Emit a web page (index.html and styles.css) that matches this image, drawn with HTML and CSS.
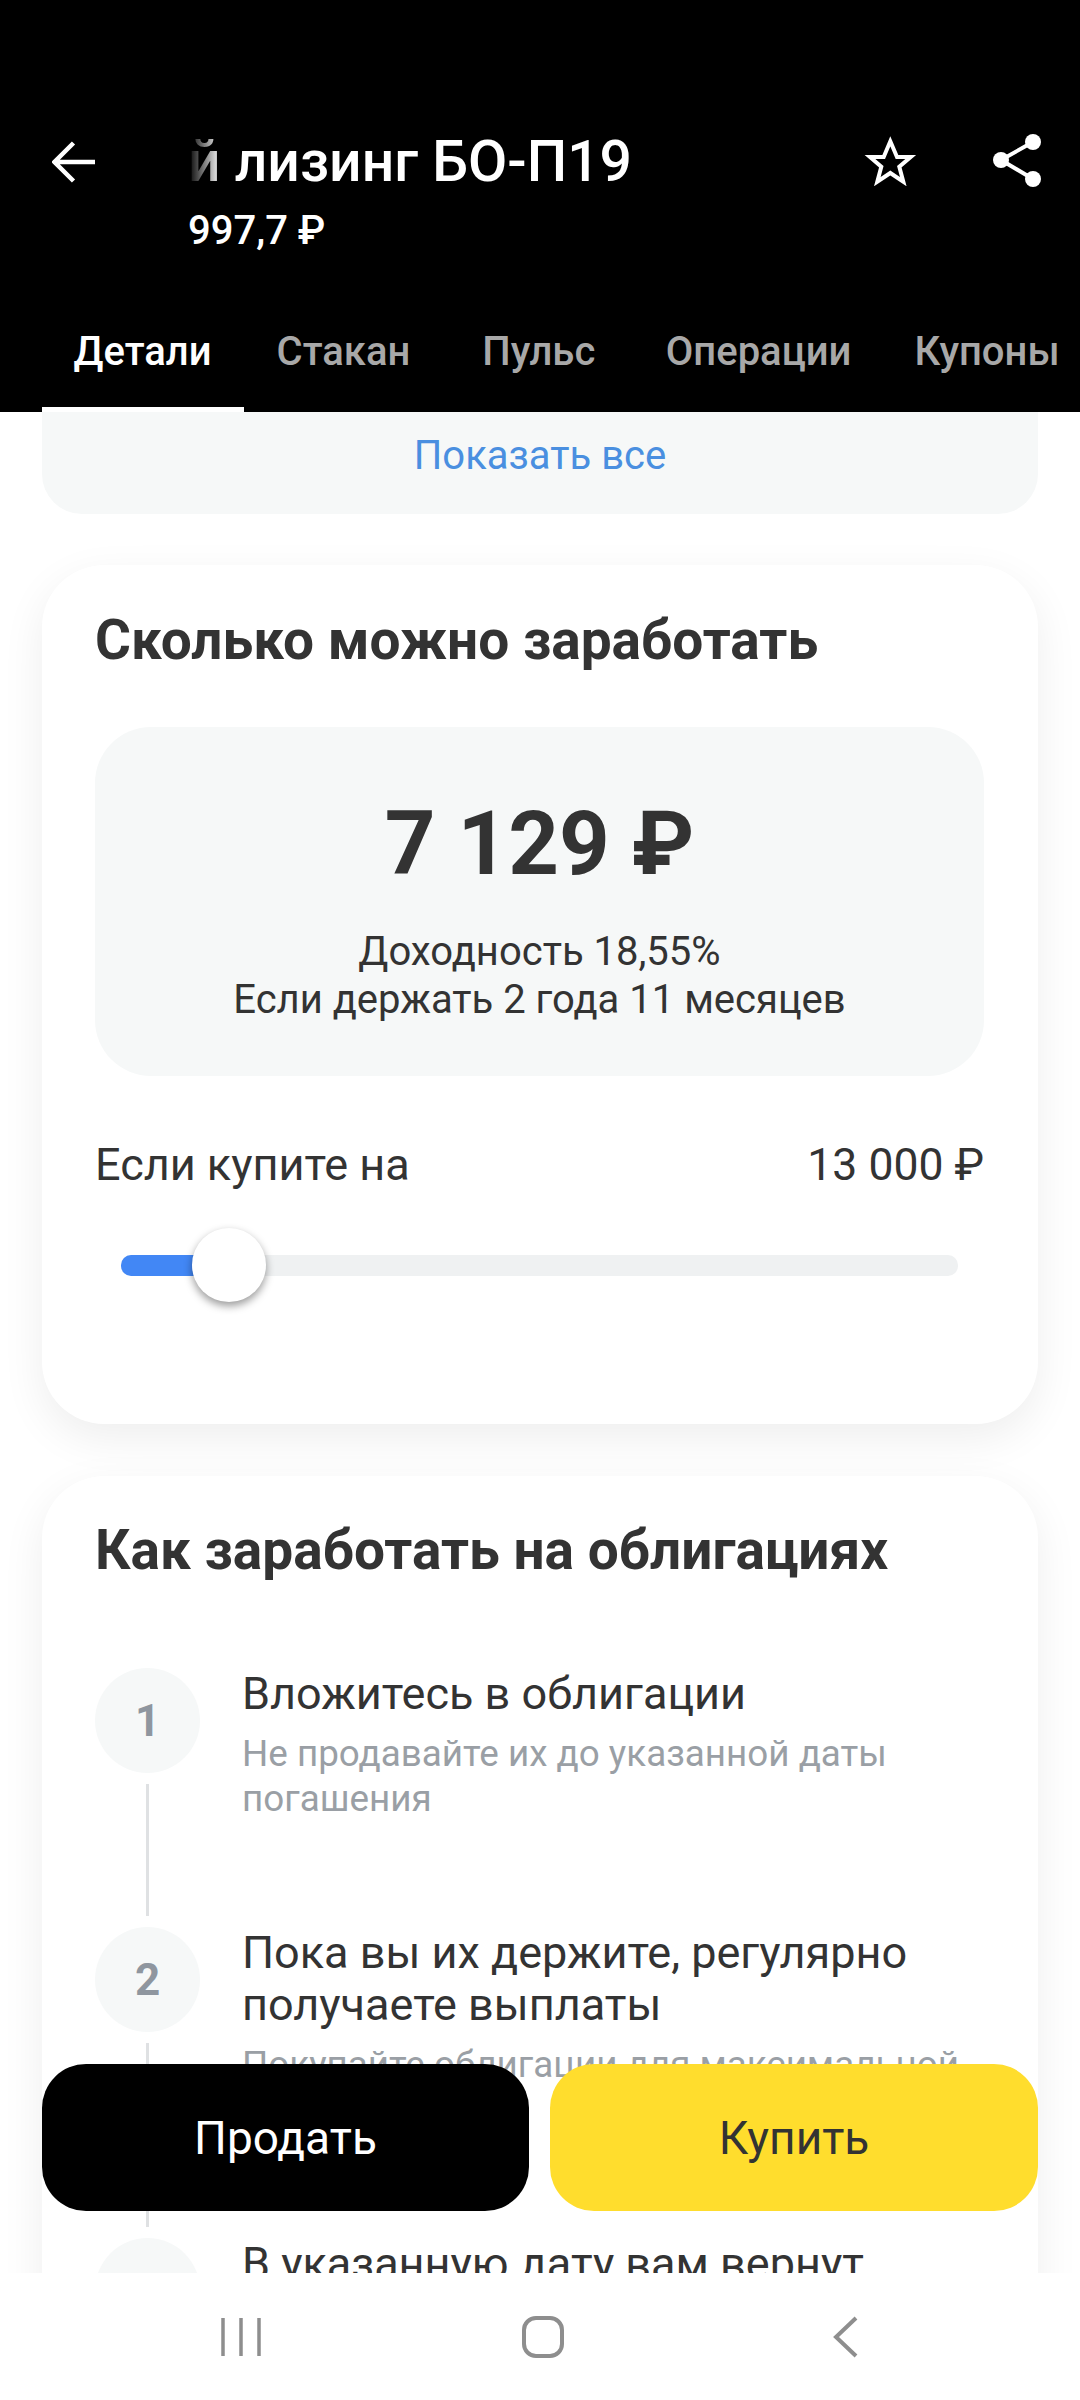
FILE: index.html
```html
<!DOCTYPE html>
<html lang="ru">
<head>
<meta charset="utf-8">
<title>Облигация</title>
<link rel="stylesheet" href="styles.css">
</head>
<body>
<div class="screen">
  <header class="header">
    <div class="topbar">
      <svg class="back" width="44" height="42" viewBox="0 0 44 42"><path d="M43 21H3M21.500 2 2.500 21l19 19" fill="none" stroke="#fff" stroke-width="4.500"/></svg>
      <div class="titles">
        <div class="title"><span class="fade">й</span> лизинг БО-П19</div>
        <div class="price">997,7 ₽</div>
      </div>
      <svg class="star" width="54" height="52" viewBox="0 0 54 52"><path d="M26.300 7.300 33 23H46.700L35.300 32.700 39.300 47.700 26.300 39 13.300 47.700 17.300 32.700 6 23H19.700z" fill="none" stroke="#fff" stroke-width="4" stroke-miterlimit="10"/></svg>
      <svg class="share" width="50" height="54" viewBox="0 0 50 54"><g fill="#fff"><circle cx="41" cy="9" r="8"/><circle cx="9" cy="27" r="8"/><circle cx="41" cy="46" r="8"/></g><path d="M41 9 9 27l32 19" fill="none" stroke="#fff" stroke-width="4"/></svg>
    </div>
    <nav class="tabs">
      <div class="tab active">Детали</div>
      <div class="tab">Стакан</div>
      <div class="tab">Пульс</div>
      <div class="tab">Операции</div>
      <div class="tab">Купоны</div>
    </nav>
  </header>

  <main class="content">
    <div class="showall">Показать все</div>

    <section class="card earn">
      <h2 class="card-title">Сколько можно заработать</h2>
      <div class="result">
        <div class="amount">7 129 ₽</div>
        <div class="result-note">Доходность 18,55%<br>Если держать 2 года 11 месяцев</div>
      </div>
      <div class="buy-row"><span>Если купите на</span><span class="buy-value">13 000 ₽</span></div>
      <div class="slider">
        <div class="slider-fill"></div>
        <div class="slider-thumb"></div>
      </div>
    </section>

    <section class="card how">
      <h2 class="card-title">Как заработать на облигациях</h2>
      <div class="step">
        <div class="step-side"><div class="step-num">1</div><div class="step-line"></div></div>
        <div class="step-body">
          <div class="step-title">Вложитесь в облигации</div>
          <div class="step-sub">Не продавайте их до указанной даты погашения</div>
        </div>
      </div>
      <div class="step">
        <div class="step-side"><div class="step-num">2</div><div class="step-line"></div></div>
        <div class="step-body">
          <div class="step-title">Пока вы их держите, регулярно получаете выплаты</div>
          <div class="step-sub">Покупайте облигации для максимальной доходности</div>
        </div>
      </div>
      <div class="step">
        <div class="step-side"><div class="step-num">3</div></div>
        <div class="step-body">
          <div class="step-title">В указанную дату вам вернут</div>
        </div>
      </div>
    </section>

    <div class="actions">
      <div class="btn sell">Продать</div>
      <div class="btn buy">Купить</div>
    </div>
  </main>

  <footer class="navbar">
    <svg width="40" height="40" viewBox="0 0 40 40"><path d="M2 1v38M20 1v38M38 1v38" fill="none" stroke="#8e8e8e" stroke-width="3.500"/></svg>
    <svg class="nav-home" width="42" height="42" viewBox="0 0 42 42"><rect x="2" y="2" width="38" height="38" rx="12" fill="none" stroke="#8e8e8e" stroke-width="4"/></svg>
    <svg width="26" height="42" viewBox="0 0 26 42"><path d="M23 2 3 21l20 19" fill="none" stroke="#8e8e8e" stroke-width="4"/></svg>
  </footer>
</div>
</body>
</html>
```
FILE: styles.css
```css
* { box-sizing: border-box; }
html, body { margin: 0; padding: 0; background: #fff; }
body { font-family: Roboto, "Noto Sans", sans-serif; color: #333; }
.screen { width: 1080px; height: 2400px; display: flex; flex-direction: column; overflow: hidden; }

.header { background: #000; color: #fff; height: 412px; flex: none; padding-top: 130px; }
.topbar { display: flex; align-items: flex-start; padding-left: 52px; }
.back { margin-top: 11px; flex: none; }
.titles { margin-left: 92px; width: 672px; flex: none; }
.title { font-size: 57px; line-height: 64px; font-weight: 500; white-space: nowrap; }
.fade { background: linear-gradient(90deg, rgba(255,255,255,0) 0%, #fff 100%); -webkit-background-clip: text; background-clip: text; color: transparent; }
.price { font-size: 40px; line-height: 46px; font-weight: 500; margin-top: 14px; }
.star { margin-top: 4px; margin-left: 4px; flex: none; }
.share { margin-top: 3px; margin-left: 74px; flex: none; }
.tabs { display: flex; padding-left: 42px; margin-top: 66px; white-space: nowrap; }
.tab { font-size: 40px; line-height: 46px; font-weight: 500; color: #a8a8a8; padding: 9px 33px 32px; }
.tab.active { color: #fff; border-bottom: 5px solid #fff; padding-left: 31.500px; padding-right: 32px; }
.tab:nth-child(3) { margin-left: 6px; }
.tab:nth-child(4) { margin-left: 4.500px; }
.tab:nth-child(5) { margin-left: -3px; }

.content { flex: 1; position: relative; overflow: hidden; padding: 0 42px; }
.showall { height: 102px; background: #f6f8f8; border-radius: 0 0 40px 40px; color: #4a8fe0; font-size: 40px; line-height: 88px; text-align: center; }

.card { background: #fff; border-radius: 62px; box-shadow: 0 14px 44px rgba(0,0,0,.07); padding: 0 54px 0 53px; }
.earn { margin-top: 51px; height: 859px; padding-top: 43px; }
.how { margin-top: 52px; padding-top: 42px; }
.card-title { margin: 0; font-size: 55px; line-height: 64px; font-weight: 700; color: #333; }
.result { margin-top: 55px; height: 349px; border-radius: 56px; background: #f6f8f8; padding-top: 65px; text-align: center; }
.amount { font-size: 88.500px; line-height: 104px; font-weight: 700; }
.result-note { margin-top: 32px; font-size: 40px; line-height: 48px; }
.buy-row { display: flex; justify-content: space-between; margin-top: 61px; font-size: 45px; line-height: 56px; }
.buy-value { font-size: 44.500px; }
.slider { position: relative; height: 21px; margin: 62px 26px 0; background: #eff1f2; border-radius: 10px; }
.slider-fill { width: 100px; height: 100%; background: #4287f5; border-radius: 10px 0 0 10px; }
.slider-thumb { position: absolute; left: 71px; top: -27px; width: 74px; height: 74px; border-radius: 50%; background: #fff; box-shadow: 0 4px 8px rgba(0,0,0,.4); }

.how .card-title { margin-bottom: 86px; }
.step { display: flex; gap: 42px; }
.step-side { width: 105px; flex: none; display: flex; flex-direction: column; align-items: center; }
.step-num { width: 105px; height: 105px; flex: none; border-radius: 50%; background: #f6f8f8; color: #8f969f; font-size: 44px; font-weight: 700; display: flex; align-items: center; justify-content: center; }
.step-line { width: 3px; flex: 1; margin: 11px 0; background: #dfe1e3; }
.step-body { flex: 1; padding: 0 0 106px; }
.step-title { font-size: 45px; line-height: 52px; color: #333; }
.step-sub { font-size: 36.800px; line-height: 45px; color: #9a9fa5; margin-top: 11px; }

.actions { position: absolute; left: 42px; right: 42px; bottom: 62px; display: flex; gap: 21px; }
.btn { height: 147px; border-radius: 44px; font-size: 46px; display: flex; align-items: center; justify-content: center; }
.sell { width: 487px; flex: none; background: #000; color: #fff; }
.buy { flex: 1; background: #ffdd2d; color: #333; }

.navbar { height: 127px; flex: none; background: #fff; display: flex; align-items: center; padding-left: 221px; position: relative; }
.nav-home { margin: 0 269px 0 261px; }
```
